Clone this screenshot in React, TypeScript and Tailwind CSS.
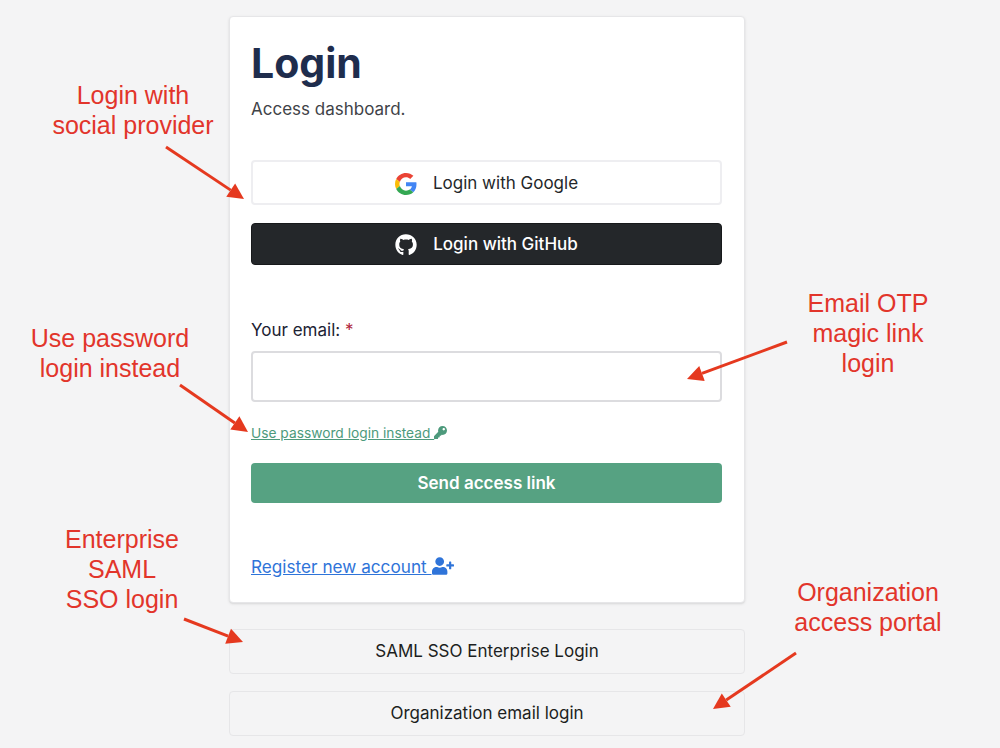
import { FaGithub, FaKey, FaUserPlus } from 'react-icons/fa';

const inter = { fontFamily: 'Inter, sans-serif' };

const notes = [
  { lines: ['Login with', 'social provider'], cls: 'left-[33px] top-[80px] w-[200px]' },
  { lines: ['Use password', 'login instead'], cls: 'left-[10px] top-[323px] w-[200px]' },
  { lines: ['Email OTP', 'magic link', 'login'], cls: 'left-[768px] top-[288px] w-[200px]' },
  { lines: ['Enterprise', 'SAML', 'SSO login'], cls: 'left-[22px] top-[524px] w-[200px]' },
  { lines: ['Organization', 'access portal'], cls: 'left-[768px] top-[577px] w-[200px]' },
];

const arrows = [
  [166, 147, 244, 199],
  [180, 385, 248, 432],
  [787, 342, 687, 379],
  [184, 619, 243, 642],
  [796, 653, 713, 709],
];

function GoogleIcon() {
  return (
    <svg viewBox="0 0 48 48" className="w-[22px] h-[22px]">
      <path fill="#EA4335" d="M24 9.5c3.5 0 6.7 1.2 9.2 3.6l6.9-6.9C35.9 2.4 30.5 0 24 0 14.6 0 6.5 5.4 2.6 13.2l8 6.2C12.5 13.7 17.8 9.5 24 9.5z" />
      <path fill="#4285F4" d="M46.9 24.5c0-1.6-.1-3.1-.4-4.5H24v9h12.9c-.6 3-2.2 5.5-4.7 7.2l7.7 6c4.5-4.2 7-10.3 7-17.7z" />
      <path fill="#FBBC05" d="M10.5 28.6c-.5-1.4-.8-3-.8-4.6s.3-3.2.8-4.6l-8-6.2C.9 16.5 0 20.100 0 24s.9 7.500 2.600 10.800l7.900-6.200z" />
      <path fill="#34A853" d="M24 48c6.500 0 11.900-2.100 15.900-5.800l-7.700-6c-2.200 1.500-4.900 2.300-8.200 2.300-6.200 0-11.500-4.200-13.400-9.900l-8 6.200C6.500 42.600 14.600 48 24 48z" />
    </svg>
  );
}

export default function App() {
  return (
    <div className="relative h-[748px] w-[1000px] overflow-hidden bg-[#f4f4f5]" style={inter}>
      <div className="ml-[229px] w-[516px] pt-4">
        {/* Card */}
        <div className="h-[587px] rounded border border-[#e6e6e8] bg-white px-[21px] pt-[21px] shadow-sm">
          <h1 className="text-[41px] leading-[50px] font-bold text-[#1f2d4d]">Login</h1>
          <p className="mt-[9px] mb-[-1px] text-[17px] leading-6 text-[#3f4348]">Access dashboard.</p>

          <button className="mt-[40px] flex h-[45px] w-[471px] items-center justify-center gap-[16px] rounded border-2 border-[#eeeef1] bg-white pt-[2px] text-[17px] text-[#24272a]">
            <GoogleIcon />
            <span>Login with Google</span>
          </button>
          <button className="mt-[18px] flex h-[42px] w-[471px] items-center justify-center gap-[16px] rounded border border-[#17191b] bg-[#24272a] pt-[2px] text-[17px] font-medium text-white">
            <FaGithub className="h-[22px] w-[22px]" />
            <span>Login with GitHub</span>
          </button>

          <label className="mt-[53px] block text-[17px] leading-6 text-[#1c2233]">
            Your email: <span className="text-[#b0243c]">*</span>
          </label>
          <input className="mt-[9px] block h-[51px] w-[471px] rounded border-2 border-[#dcdcdf] bg-white outline-none" />

          <div className="mt-[21px] text-[13.75px] leading-5">
            <a className="text-[#4d9a7c] underline">
              Use password login instead <FaKey className="inline h-[13px] w-[13px] align-[-1px]" />
            </a>
          </div>

          <button className="mt-[20px] h-[40px] w-[471px] rounded bg-[#56a282] pt-[2px] text-[17px] font-semibold text-white">Send access link</button>

          <div className="mt-[52px] text-[17.2px] leading-6">
            <a className="text-[#2f74d9] underline">
              Register new account <FaUserPlus className="inline h-[18px] w-[22px] align-[-2px]" />
            </a>
          </div>
        </div>

        <button className="mt-[26px] block h-[45px] w-full rounded border border-[#e6e6e8] pt-px text-[17px] text-[#1c1e21]">SAML SSO Enterprise Login</button>
        <button className="mt-[17px] block h-[45px] w-full rounded border border-[#e6e6e8] pt-px text-[17px] text-[#1c1e21]">Organization email login</button>
      </div>

      {/* Red annotations on top of the screenshot */}
      {notes.map((n) => (
        <div
          key={n.lines[0]}
          className={`absolute text-center text-[25px] leading-[30px] text-[#e2352b] ${n.cls}`}
          style={{ fontFamily: '"Liberation Sans", sans-serif' }}
        >
          {n.lines.map((l) => (
            <div key={l}>{l}</div>
          ))}
        </div>
      ))}
      <svg className="pointer-events-none absolute inset-0" width="1000" height="748">
        {arrows.map(([x1, y1, x2, y2]) => {
          const a = Math.atan2(y2 - y1, x2 - x1);
          const bx = x2 - Math.cos(a) * 16;
          const by = y2 - Math.sin(a) * 16;
          const px = -Math.sin(a) * 8;
          const py = Math.cos(a) * 8;
          return (
            <g key={x1}>
              <line x1={x1} y1={y1} x2={bx} y2={by} stroke="#e5391f" strokeWidth="3" />
              <polygon points={`${x2},${y2} ${bx + px},${by + py} ${bx - px},${by - py}`} fill="#e5391f" />
            </g>
          );
        })}
      </svg>
    </div>
  );
}
